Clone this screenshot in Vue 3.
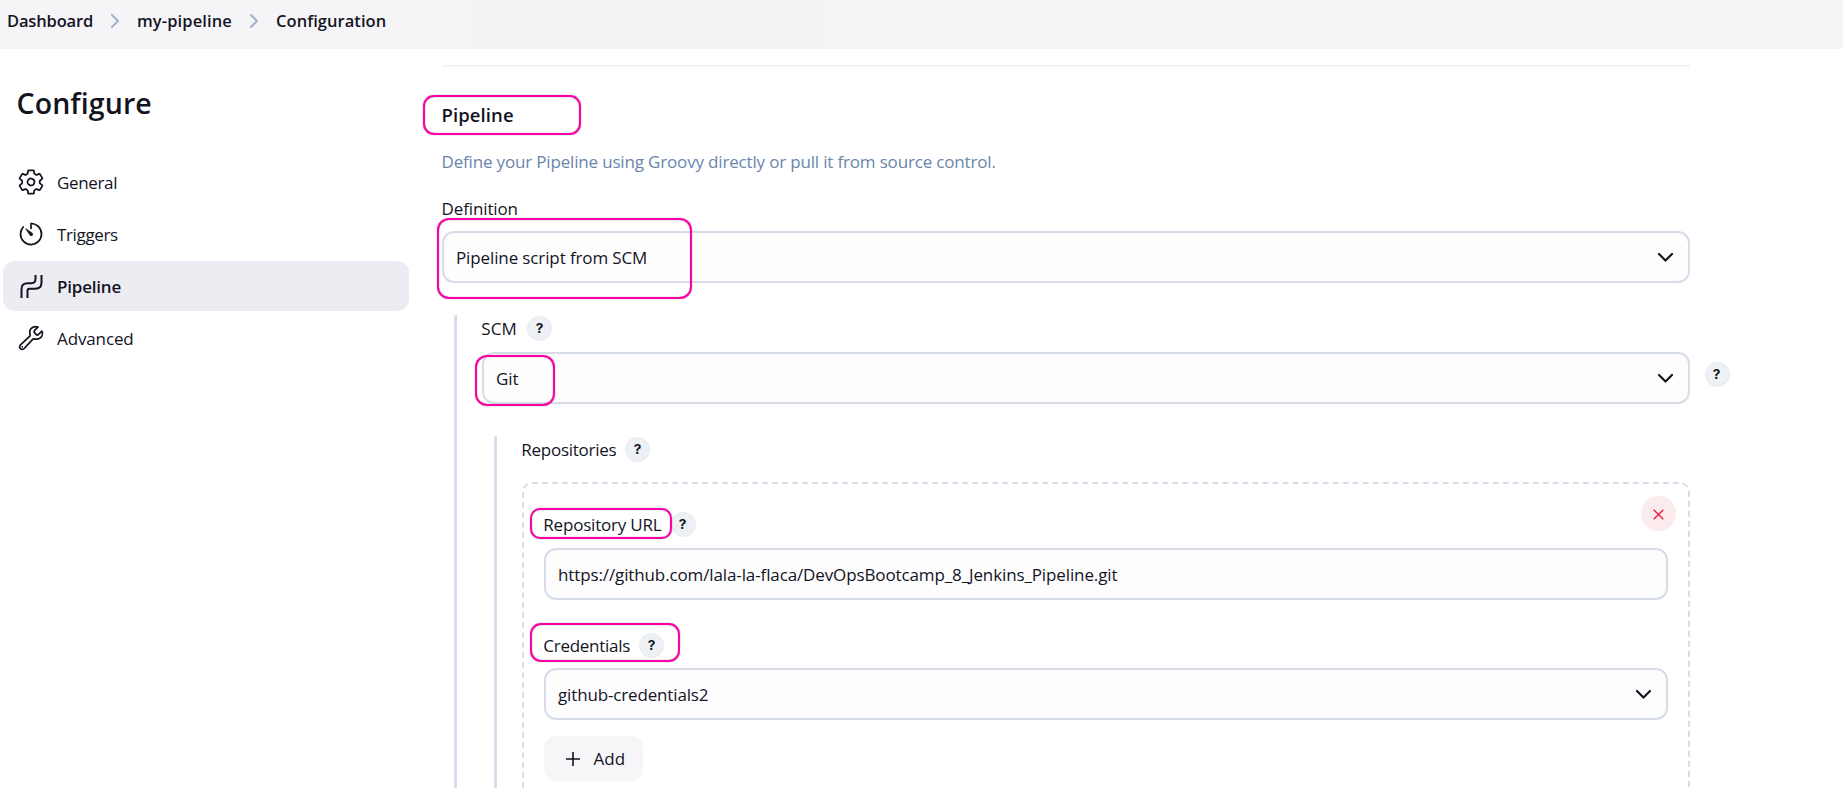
<script setup>
const crumbs = [
  { text: 'Dashboard', cls: 'crumb-a' },
  { text: 'my-pipeline', cls: 'crumb-b' },
  { text: 'Configuration', cls: 'crumb-c' },
]
const nav = [
  { text: 'General', icon: 'gear' },
  { text: 'Triggers', icon: 'timer' },
  { text: 'Pipeline', icon: 'pipe', active: true },
  { text: 'Advanced', icon: 'wrench' },
]
</script>

<template>
  <div class="page">
    <header class="bar">
      <template v-for="(c, i) in crumbs" :key="c.text">
        <svg v-if="i" class="sep" width="8" height="14" viewBox="0 0 8 14"><path d="M1 1l6 6-6 6" /></svg>
        <a class="crumb" :class="c.cls">{{ c.text }}</a>
      </template>
      <i class="haze"></i>
    </header>

    <div class="body">
      <aside class="side">
        <h1>Configure</h1>
        <nav>
          <a v-for="n in nav" :key="n.text" class="item" :class="{ active: n.active }">
            <svg v-if="n.icon === 'gear'" class="ico" viewBox="0 0 512 512">
              <path d="M262.29 192.31a64 64 0 1057.4 57.4 64.13 64.13 0 00-57.4-57.4zM416.39 256a154.34 154.34 0 01-1.53 20.79l45.21 35.46a10.81 10.81 0 012.45 13.75l-42.77 74a10.81 10.81 0 01-13.14 4.59l-44.9-18.08a16.11 16.11 0 00-15.17 1.75A164.48 164.48 0 01325 400.8a15.94 15.94 0 00-8.82 12.14l-6.73 47.89a11.08 11.08 0 01-10.68 9.17h-85.54a11.11 11.11 0 01-10.69-8.87l-6.72-47.82a16.07 16.07 0 00-9-12.22 155.3 155.3 0 01-21.46-12.57 16 16 0 00-15.11-1.71l-44.89 18.07a10.81 10.81 0 01-13.14-4.58l-42.77-74a10.8 10.8 0 012.45-13.75l38.21-30a16.05 16.05 0 006-14.08c-.36-4.17-.58-8.33-.58-12.5s.21-8.27.58-12.35a16 16 0 00-6.07-13.94l-38.19-30A10.81 10.81 0 0149.48 186l42.77-74a10.81 10.81 0 0113.14-4.59l44.9 18.08a16.11 16.11 0 0015.17-1.75A164.48 164.48 0 01187 111.2a15.94 15.94 0 008.82-12.14l6.73-47.89A11.08 11.08 0 01213.23 42h85.54a11.11 11.11 0 0110.69 8.87l6.72 47.82a16.07 16.07 0 009 12.22 155.3 155.3 0 0121.46 12.57 16 16 0 0015.11 1.71l44.89-18.07a10.81 10.81 0 0113.14 4.58l42.77 74a10.8 10.8 0 01-2.45 13.75l-38.21 30a16.05 16.05 0 00-6.05 14.08c.33 4.14.55 8.3.55 12.47z" />
            </svg>
            <svg v-else-if="n.icon === 'timer'" class="ico" viewBox="0 0 512 512">
              <path d="M112.91 128A191.85 191.85 0 0064 254c-1.18 106.35 85.65 193.8 192 194 106.2.2 192-85.83 192-192 0-104.54-83.55-189.61-187.5-192a4.36 4.36 0 00-4.5 4.37V152" />
              <path class="solid" d="M233.38 278.63l-79-113a8.13 8.13 0 0111.32-11.32l113 79a32.5 32.5 0 01-37.25 53.26 33.21 33.21 0 01-8.07-7.94z" />
            </svg>
            <svg v-else-if="n.icon === 'pipe'" class="ico" viewBox="0 0 28 28">
              <path class="pipe" d="M4.500 26v-8.500c0-4.300 1.900-6.200 6.200-6.200h3.600c2.900 0 4.200-1.300 4.200-4.200V3M10.500 26v-7.200c0-1.400.6-2 2-2h5.800c4.300 0 6.200-1.900 6.200-6.200V3" />
            </svg>
            <svg v-else class="ico" viewBox="0 0 512 512">
              <path d="M393.87 190a32.1 32.1 0 01-45.25 0l-26.57-26.57a32.09 32.09 0 010-45.26L382.19 58a1 1 0 00-.3-1.64c-38.82-16.64-89.15-8.16-121.11 23.57-30.58 30.35-32.32 76-21.12 115.84a31.93 31.93 0 01-9.06 32.08L64 380a48.17 48.17 0 1068 68l153.86-167a31.93 31.93 0 0131.6-9.13c39.54 10.59 84.54 8.6 114.72-21.19 32.49-32 39.5-88.56 23.75-120.93a1 1 0 00-1.6-.26z" />
              <circle class="solid" cx="96" cy="416" r="16" />
            </svg>
            <span>{{ n.text }}</span>
          </a>
        </nav>
      </aside>

      <main class="main">
        <hr />
        <h2 class="anchor">Pipeline<i class="mark m-title"></i></h2>
        <p class="desc">Define your Pipeline using Groovy directly or pull it from source control.</p>
        <label class="plain">Definition</label>
        <div class="field select anchor">
          <span>Pipeline script from SCM</span>
          <svg class="chev" viewBox="0 0 17 11"><path d="M2 2l6.500 6.500L15 2" /></svg>
          <i class="mark m-def"></i>
        </div>

        <section class="nest first">
          <div class="row"><span class="scm">SCM</span><b class="help">?</b></div>
          <div class="field select anchor">
            <span>Git</span>
            <svg class="chev" viewBox="0 0 17 11"><path d="M2 2l6.500 6.500L15 2" /></svg>
            <i class="mark m-git"></i>
            <b class="help outside">?</b>
          </div>

          <section class="nest second">
            <div class="row"><span class="repos">Repositories</span><b class="help">?</b></div>
            <div class="repo anchor">
              <button class="remove"><svg width="11" height="11" viewBox="0 0 11 11"><path d="M.7.7l9.600 9.600M10.300.7L.7 10.300" /></svg></button>
              <div class="row anchor"><span class="url-label">Repository URL</span><b class="help shifted">?</b><i class="mark m-url"></i></div>
              <div class="field"><span class="url">https://github.com/lala-la-flaca/DevOpsBootcamp_8_Jenkins_Pipeline.git</span></div>
              <div class="row anchor cred"><span class="cred-label">Credentials</span><b class="help">?</b><i class="mark m-cred"></i></div>
              <div class="field select">
                <span class="cred-value">github-credentials2</span>
                <svg class="chev" viewBox="0 0 17 11"><path d="M2 2l6.500 6.500L15 2" /></svg>
              </div>
              <button class="add"><svg width="14" height="14" viewBox="0 0 14 14"><path d="M7 0v14M0 7h14" /></svg>Add</button>
            </div>
          </section>
        </section>
      </main>
    </div>
  </div>
</template>

<style>
body { margin: 0; background: #fff; }
</style>

<style scoped>
* { box-sizing: border-box; }
.page {
  width: 1843px; height: 788px; overflow: hidden; background: #fff; color: #14141f;
  font: 400 17px/24px "Open Sans", "Noto Sans", sans-serif; letter-spacing: -0.12px;
}
.bar {
  position: relative; height: 49px; background: #f5f5f8; display: flex; align-items: center;
  padding: 0 0 8px 7px;
}
.crumb { font-weight: 600; font-size: 16.5px; white-space: nowrap; }
.crumb-a { width: 104px; letter-spacing: -0.15px; }
.crumb-b { width: 112px; letter-spacing: 0.1px; margin-left: -1px; margin-right: 1px; }
.crumb-c { letter-spacing: 0.05px; margin-left: -1px; }
.sep { margin-right: 19px; flex: none; fill: none; stroke: #9fb3cc; stroke-width: 2; stroke-linecap: round; stroke-linejoin: round; }
.haze {
  position: absolute; left: 440px; top: 0; width: 410px; height: 49px;
  background: linear-gradient(90deg, transparent, rgba(70, 70, 50, 0.017) 18%, rgba(70, 70, 50, 0.017) 84%, transparent);
}
.body { display: flex; }
.side { width: 442px; padding: 36px 33px 0 3px; flex: none; }
h1 { margin: 0 0 36px 13.500px; font-weight: 600; font-size: 28.5px; line-height: 36px; letter-spacing: 0.1px; height: 36px; }
nav { display: flex; flex-direction: column; gap: 2px; }
.item { height: 50px; border-radius: 12px; display: flex; align-items: center; padding-left: 13.500px; gap: 12.500px; letter-spacing: -0.35px; }
.item span { padding-top: 2px; }
.item.active { background: #ecedf3; font-weight: 600; letter-spacing: -0.2px; }
.item:last-child { letter-spacing: -0.12px; }
.ico { width: 28px; height: 28px; fill: none; stroke: #14141f; stroke-width: 32; stroke-linecap: round; stroke-linejoin: round; margin-top: -1px; }
.ico .solid { fill: #14141f; stroke: none; }
.ico .pipe { stroke-width: 2; stroke-linecap: butt; }

.main { width: 1248px; padding-top: 16px; flex: none; }
hr { height: 2px; border: 0; margin: 0; background: #f1f1f8; }
h2 { margin: 36px 0 0; font-size: 18.500px; font-weight: 600; line-height: 24px; letter-spacing: 0.1px; text-indent: -0.5px; }
.desc { margin: 23px 0; color: #6a86ab; letter-spacing: -0.17px; text-indent: -0.5px; }
.plain { display: block; margin-bottom: 10px; text-indent: -0.5px; }
.anchor { position: relative; }
.field {
  height: 52px; border: 2px solid #d7dde8; border-radius: 12px; background: #fdfdfe;
  display: flex; align-items: center; justify-content: space-between; padding: 0 14px 0 12px;
}
.field > span { padding-top: 2px; }
.chev { width: 17px; height: 11px; fill: none; stroke: #14141f; stroke-width: 2.200; stroke-linecap: round; stroke-linejoin: round; }
.nest { border-left: 3px solid #d7dde8; border-radius: 2px 0 0 0; margin: 32px 0 0 12px; padding: 1px 0 0 25px; }
.row { display: flex; align-items: center; height: 25px; margin-bottom: 11px; gap: 10px; }
.row > span { text-indent: -0.7px; white-space: nowrap; }
.scm { letter-spacing: 0.1px; width: 35px; }
.repos { letter-spacing: -0.27px; width: 93px; }
.url-label { letter-spacing: -0.2px; width: 117px; }
.url { letter-spacing: -0.12px; }
.cred-label { letter-spacing: -0.28px; width: 85px; }
.cred-value { letter-spacing: -0.15px; }
.help {
  width: 25px; height: 25px; border-radius: 50%; background: #edf1f5; border: 1px solid #e6eaf0; flex: none;
  font: 700 13.500px/23px Inter, sans-serif; text-align: center; letter-spacing: 0;
}
.shifted { padding-right: 2px; }
.outside { position: absolute; left: 1221px; top: 8px; padding-right: 2px; }
.second > .row { margin-bottom: 20px; }
.repo { height: 400px; border: 2px dashed #d7dde8; border-radius: 10px; padding: 28px 20px 0; }
.cred { margin: 33px 0 10px; }
.remove {
  position: absolute; right: 12px; top: 12px; width: 35px; height: 35px; border: 0; border-radius: 50%;
  background: #fcebed; padding: 0; display: flex; align-items: center; justify-content: center;
}
.remove svg { stroke: #e6213f; stroke-width: 1.400; margin: 1px 1px 0 0; }
.add {
  margin-top: 16px; width: 99px; height: 45px; border: 0; border-radius: 12px; background: #f6f6f9; color: inherit;
  font: inherit; display: flex; align-items: center; padding: 1px 0 0 22px; gap: 13.500px;
}
.add svg { stroke: #14141f; stroke-width: 1.600; }
.mark {
  position: absolute; border: 2px solid #ff00a8; border-radius: 12px; pointer-events: none;
  box-shadow: 0 0 1px rgba(40, 60, 50, 0.8), inset 0 0 1px rgba(40, 60, 50, 0.8);
}
.m-title { left: -19px; top: -8px; width: 158px; height: 40px; border-radius: 11px; }
.m-def { left: -7px; top: -15px; width: 255px; height: 81px; }
.m-git { left: -9px; top: 1px; width: 80px; height: 51px; }
.m-url { left: -14px; top: -4px; width: 142px; height: 31px; border-radius: 10px; }
.m-cred { left: -14px; top: -10px; width: 150px; height: 39px; border-radius: 11px; }
</style>
